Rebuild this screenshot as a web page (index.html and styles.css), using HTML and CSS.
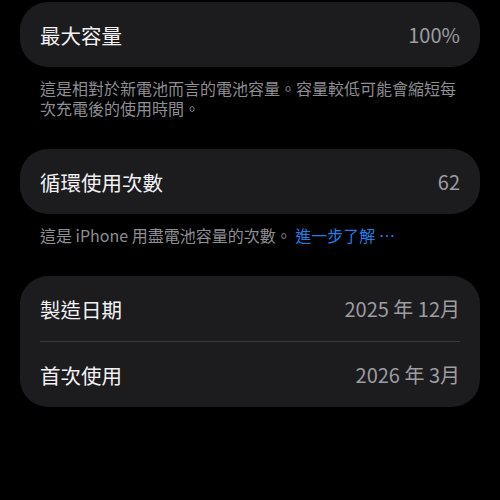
FILE: index.html
```html
<!DOCTYPE html>
<html lang="zh-Hant">
<head>
  <meta charset="UTF-8" />
  <meta name="viewport" content="width=device-width, initial-scale=1.0" />
  <title>電池健康度</title>
  <link rel="stylesheet" href="styles.css">
</head>
<body>
  <!-- Maximum capacity -->
  <div class="group">
    <div class="row">
      <span class="label">最大容量</span>
      <span class="value">100%</span>
    </div>
  </div>
  <p class="note">這是相對於新電池而言的電池容量。容量較低可能會縮短每次充電後的使用時間。</p>

  <!-- Cycle count -->
  <div class="group">
    <div class="row">
      <span class="label">循環使用次數</span>
      <span class="value">62</span>
    </div>
  </div>
  <p class="note">這是 iPhone 用盡電池容量的次數。 <a class="link" href="#">進一步了解 ⋯</a></p>

  <!-- Dates -->
  <div class="group">
    <div class="row">
      <span class="label">製造日期</span>
      <span class="value">2025 年 12月</span>
    </div>
    <div class="divider"></div>
    <div class="row">
      <span class="label">首次使用</span>
      <span class="value">2026 年 3月</span>
    </div>
  </div>
</body>
</html>
```

FILE: styles.css
```css
body {
  margin: 0;
  padding: 2px 20px 0;
  background-color: #000;
  color: #fff;
  font-family: "Noto Sans CJK TC", "Noto Sans", sans-serif;
}
/* Card groups */
.group {
  background-color: #1c1c1e;
  border-radius: 28px;
  padding: 0 20px;
}
.row {
  height: 65px;
  display: flex;
  align-items: center;
  justify-content: space-between;
}
.label {
  font-size: 20.5px;
  color: #f2f2f4;
}
.value {
  font-size: 20px;
  color: #9d9da3;
}
.divider {
  height: 1px;
  background-color: #3a3a3c;
}
/* Footnotes */
.note {
  margin: 11px 0 31px;
  padding: 0 20px;
  font-size: 16px;
  line-height: 20px;
  color: #8e8e93;
}
.link {
  color: #1f7fe6;
  text-decoration: none;
}
```
